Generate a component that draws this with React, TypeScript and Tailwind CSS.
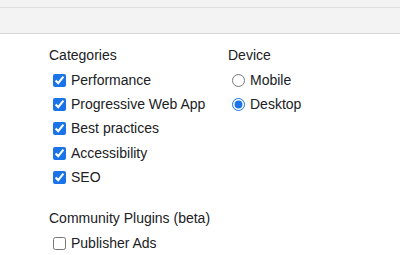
import React from "react";

const font = { fontFamily: '"Liberation Sans", Arial, sans-serif' };

function Check({ label, checked }: { label: string; checked?: boolean }) {
  return (
    <label className="flex items-center h-[24.4px]">
      <input type="checkbox" defaultChecked={checked} className="m-0 ml-[4px] w-[13px] h-[13px] accent-[#1a73e8]" />
      <span className="ml-[5px]">{label}</span>
    </label>
  );
}

function Radio({ label, checked }: { label: string; checked?: boolean }) {
  return (
    <label className="flex items-center h-[24.4px]">
      <input type="radio" name="device" defaultChecked={checked} className="m-0 ml-[4px] w-[13px] h-[13px] accent-[#1a73e8]" />
      <span className="ml-[5px]">{label}</span>
    </label>
  );
}

export default function App() {
  return (
    <div className="w-[400px] h-[255px] bg-white overflow-hidden text-[14px] text-[#202124]" style={font}>
      <div className="h-[34px] bg-[#f3f3f3] flex flex-col">
        <div className="h-[7px]" />
        <div className="h-px bg-[#e0e0e0]" />
        <div className="flex-1" />
        <div className="h-px bg-[#d6d6d6]" />
      </div>
      <div className="pl-[49px] pt-[13px]">
        <div className="flex">
          <div className="w-[179px]">
            <div className="h-[16px] leading-[16px]">Categories</div>
            <div className="mt-[5px]">
              <Check label="Performance" checked />
              <Check label="Progressive Web App" checked />
              <Check label="Best practices" checked />
              <Check label="Accessibility" checked />
              <Check label="SEO" checked />
            </div>
          </div>
          <div>
            <div className="h-[16px] leading-[16px]">Device</div>
            <div className="mt-[5px]">
              <Radio label="Mobile" />
              <Radio label="Desktop" checked />
            </div>
          </div>
        </div>
        <div className="mt-[20px] h-[16px] leading-[16px]">Community Plugins (beta)</div>
        <div className="mt-[5px]">
          <Check label="Publisher Ads" />
        </div>
      </div>
    </div>
  );
}
